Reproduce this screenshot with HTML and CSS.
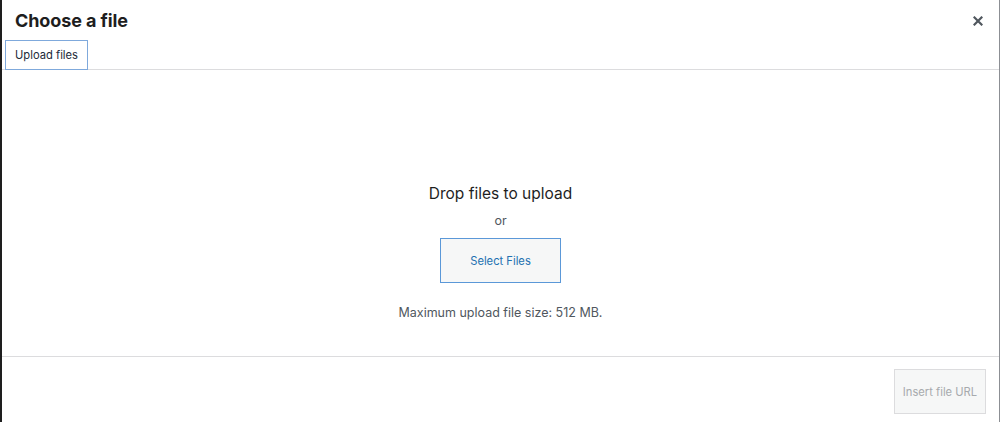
FILE: index.html
```html
<!DOCTYPE html>
<html>
  <head>
    <meta name="viewport" content="width=device-width, initial-scale=1" />
    <title>Choose a file</title>
    <link rel="stylesheet" href="styles.css">
  </head>
  <body>
    <div class="modal">
      <div class="modal-head">
        <h1 class="modal-title">Choose a file</h1>
        <button class="close-btn" aria-label="Close">
          <svg width="10" height="10" viewBox="0 0 10 10">
            <path d="M1.5 1.5 L8.5 8.5 M8.5 1.5 L1.5 8.5" stroke="#50575e" stroke-width="2.2" stroke-linecap="square" />
          </svg>
        </button>
      </div>

      <div class="tabs">
        <button class="tab active">Upload files</button>
      </div>

      <div class="uploader">
        <p class="drop-text">Drop files to upload</p>
        <p class="or-text">or</p>
        <button class="select-btn">Select Files</button>
        <p class="max-size">Maximum upload file size: 512 MB.</p>
      </div>

      <div class="modal-foot">
        <button class="url-btn" disabled>Insert file URL</button>
      </div>
    </div>
  </body>
</html>
```

FILE: styles.css
```css
body {
  margin: 0;
  font-family: Inter, "Noto Sans", sans-serif;
  background-color: #fff;
  color: #1e1e1e;
}

.modal {
  height: 422px;
  border-left: 2px solid #1e1e1e;
  border-right: 1px solid #8c8f94;
  box-sizing: border-box;
  display: flex;
  flex-direction: column;
}

.modal-head {
  display: flex;
  justify-content: space-between;
  align-items: center;
  height: 40px;
  padding: 0 16px 0 13px;
}

.modal-title {
  margin: 0;
  font-size: 18px;
  font-weight: 700;
  letter-spacing: -0.1px;
  color: #1e1e1e;
}

.close-btn {
  background: none;
  border: none;
  padding: 0;
  margin-top: 3px;
  cursor: pointer;
}

.tabs {
  display: flex;
  padding: 0 0 0 3px;
  border-bottom: 1px solid #dcdcde;
}

.tab {
  font-family: inherit;
  font-size: 11.2px;
  color: #1d2b3a;
  background: #fff;
  border: 1px solid #7fa9dc;
  padding: 0;
  width: 83px;
  height: 30px;
  margin-bottom: -1px;
}

.uploader {
  flex: 1;
  display: flex;
  flex-direction: column;
  align-items: center;
  padding-top: 114px;
}

.drop-text {
  margin: 0;
  font-size: 15.5px;
  color: #1e1e1e;
}

.or-text {
  margin: 10px 0 0;
  font-size: 12.5px;
  color: #50575e;
}

.select-btn {
  margin-top: 10px;
  width: 121px;
  height: 45px;
  font-family: inherit;
  font-size: 11.2px;
  color: #2271b1;
  background: #f6f7f7;
  border: 1px solid #5b98d8;
  cursor: pointer;
}

.max-size {
  margin: 22px 0 0;
  font-size: 12.5px;
  color: #50575e;
}

.modal-foot {
  display: flex;
  justify-content: flex-end;
  border-top: 1px solid #dcdcde;
  padding: 12px 13px 8px;
}

.url-btn {
  width: 92px;
  height: 45px;
  padding: 0;
  white-space: nowrap;
  font-family: inherit;
  font-size: 11.2px;
  color: #a7aaad;
  background: #f6f7f7;
  border: 1px solid #dcdcde;
}
```
